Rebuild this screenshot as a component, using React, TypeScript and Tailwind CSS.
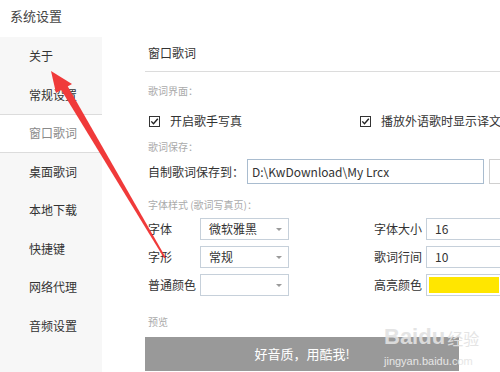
import { ReactNode } from 'react';

const font = { fontFamily: '"Noto Sans CJK SC", "Noto Sans", sans-serif' };

const menu = ['关于', '常规设置', '窗口歌词', '桌面歌词', '本地下载', '快捷键', '网络代理', '音频设置'];

function CheckBox() {
  return (
    <svg width="11" height="11" viewBox="0 0 11 11" className="shrink-0">
      <rect x="0.5" y="0.5" width="10" height="10" fill="white" stroke="#333" />
      <path d="M2.3 5.4 L4.5 7.8 L8.8 2.8" fill="none" stroke="#222" strokeWidth="1.4" />
    </svg>
  );
}

function Select({ value }: { value?: string }) {
  return (
    <div className="w-[89px] h-[22px] shrink-0 border border-[#c6d0da] bg-white flex items-center pl-[8px] pr-[6px] justify-between">
      <span className="text-[12px] text-[#333]">{value}</span>
      <span className="w-0 h-0 border-l-[3px] border-r-[3px] border-t-[3px] border-l-transparent border-r-transparent border-t-[#9a9a9a]" />
    </div>
  );
}

function Row({ label, children, right, rightBox }: { label: string; children: ReactNode; right: string; rightBox: ReactNode }) {
  return (
    <div className="flex items-center h-[22px] mt-[6px] whitespace-nowrap">
      <span className="w-[52px] shrink-0 text-[12px] text-[#333]">{label}</span>
      {children}
      <span className="w-[52px] shrink-0 ml-[85px] text-[12px] text-[#333]">{right}</span>
      <div className="w-[90px] h-[22px] shrink-0 border border-[#c6d0da] bg-white flex items-center pl-[8px]">{rightBox}</div>
    </div>
  );
}

export default function App() {
  return (
    <div className="relative w-[500px] h-[372px] overflow-hidden bg-white" style={font}>
      <div className="h-[37px] pl-[10px] pt-[7px] text-[13px] leading-[18px] text-[#444]">系统设置</div>

      <div className="flex">
        {/* sidebar */}
        <div className="w-[102px] h-[335px] shrink-0 bg-[#f7f7f7]">
          {menu.map((m) => {
            const active = m === '窗口歌词';
            return (
              <div
                key={m}
                className={
                  active
                    ? 'h-[38.5px] flex items-center pl-[29px] text-[12px] bg-white text-[#8a8a8a] border-y border-[#dcdcdc]'
                    : 'h-[38.5px] flex items-center pl-[29px] text-[12px] text-[#333]'
                }
              >
                {m}
              </div>
            );
          })}
        </div>

        {/* content */}
        <div className="flex-1 pl-[43px]">
          <div className="pt-[7px] pb-[9px] pl-[3px] border-b border-[#dcdcdc] text-[12px] leading-[18px] text-[#333]">窗口歌词</div>

          <div className="pl-[3px]">
            <div className="mt-[12px] text-[10px] leading-[14px] text-[#aaa]">歌词界面：</div>

            <div className="mt-[15px] h-[16px] flex items-center text-[12px] text-[#333] whitespace-nowrap">
              <div className="w-[212px] flex items-center pl-px shrink-0">
                <CheckBox />
                <span className="ml-[10px]">开启歌手写真</span>
              </div>
              <CheckBox />
              <span className="ml-[10px]">播放外语歌时显示译文歌词</span>
            </div>

            <div className="mt-[11px] text-[10px] leading-[14px] text-[#aaa]">歌词保存：</div>

            <div className="mt-[5px] h-[25px] flex items-center whitespace-nowrap">
              <span className="w-[99px] shrink-0 text-[12px] text-[#333]">自制歌词保存到：</span>
              <div className="w-[237px] h-[25px] shrink-0 border border-[#a9bccf] flex items-center pl-[4px] text-[12px] text-[#333]">
                D:\KwDownload\My Lrcx
              </div>
              <div className="w-[30px] h-[25px] shrink-0 ml-[5px] border border-[#d0d0d0]" />
            </div>

            <div className="mt-[14px] text-[10px] leading-[14px] text-[#aaa]">字体样式 (歌词写真页)：</div>

            <div className="mt-[4px]">
              <Row label="字体" right="字体大小" rightBox={<span className="text-[12px] text-[#333]">16</span>}>
                <Select value="微软雅黑" />
              </Row>
              <Row label="字形" right="歌词行间" rightBox={<span className="text-[12px] text-[#333]">10</span>}>
                <Select value="常规" />
              </Row>
              <Row label="普通颜色" right="高亮颜色" rightBox={<div className="-ml-[6px] w-[70px] h-[16px] bg-[#ffe600]" />}>
                <Select />
              </Row>
            </div>

            <div className="mt-[19px] text-[10px] leading-[14px] text-[#aaa]">预览</div>

            <div className="mt-[8px] -ml-[3px] w-[314px] h-[34px] bg-[#999] flex items-center justify-center text-[13px] text-white">
              好音质，用酷我!
            </div>
          </div>
        </div>
      </div>

      {/* watermark */}
      <div className="absolute left-[384px] top-[325px] flex items-end text-[#e2e2e2] opacity-90 pointer-events-none">
        <span className="text-[22px] font-bold leading-[24px]" style={{ fontFamily: '"Liberation Sans", sans-serif' }}>Baidu</span>
        <span className="text-[16px] ml-[2px] leading-[21px]">经验</span>
      </div>
      <div
        className="absolute left-[384px] top-[353px] text-[11px] text-[#e6e6e6] pointer-events-none"
        style={{ fontFamily: '"Liberation Sans", sans-serif' }}
      >
        jingyan.baidu.com
      </div>

      {/* red arrow */}
      <svg className="absolute left-0 top-0 pointer-events-none" width="500" height="372">
        <polygon points="51,71 56,93 72,84" fill="#f03a3a" />
        <polygon points="60,88 67,85 166,258 164,258" fill="#f03a3a" />
      </svg>
    </div>
  );
}
